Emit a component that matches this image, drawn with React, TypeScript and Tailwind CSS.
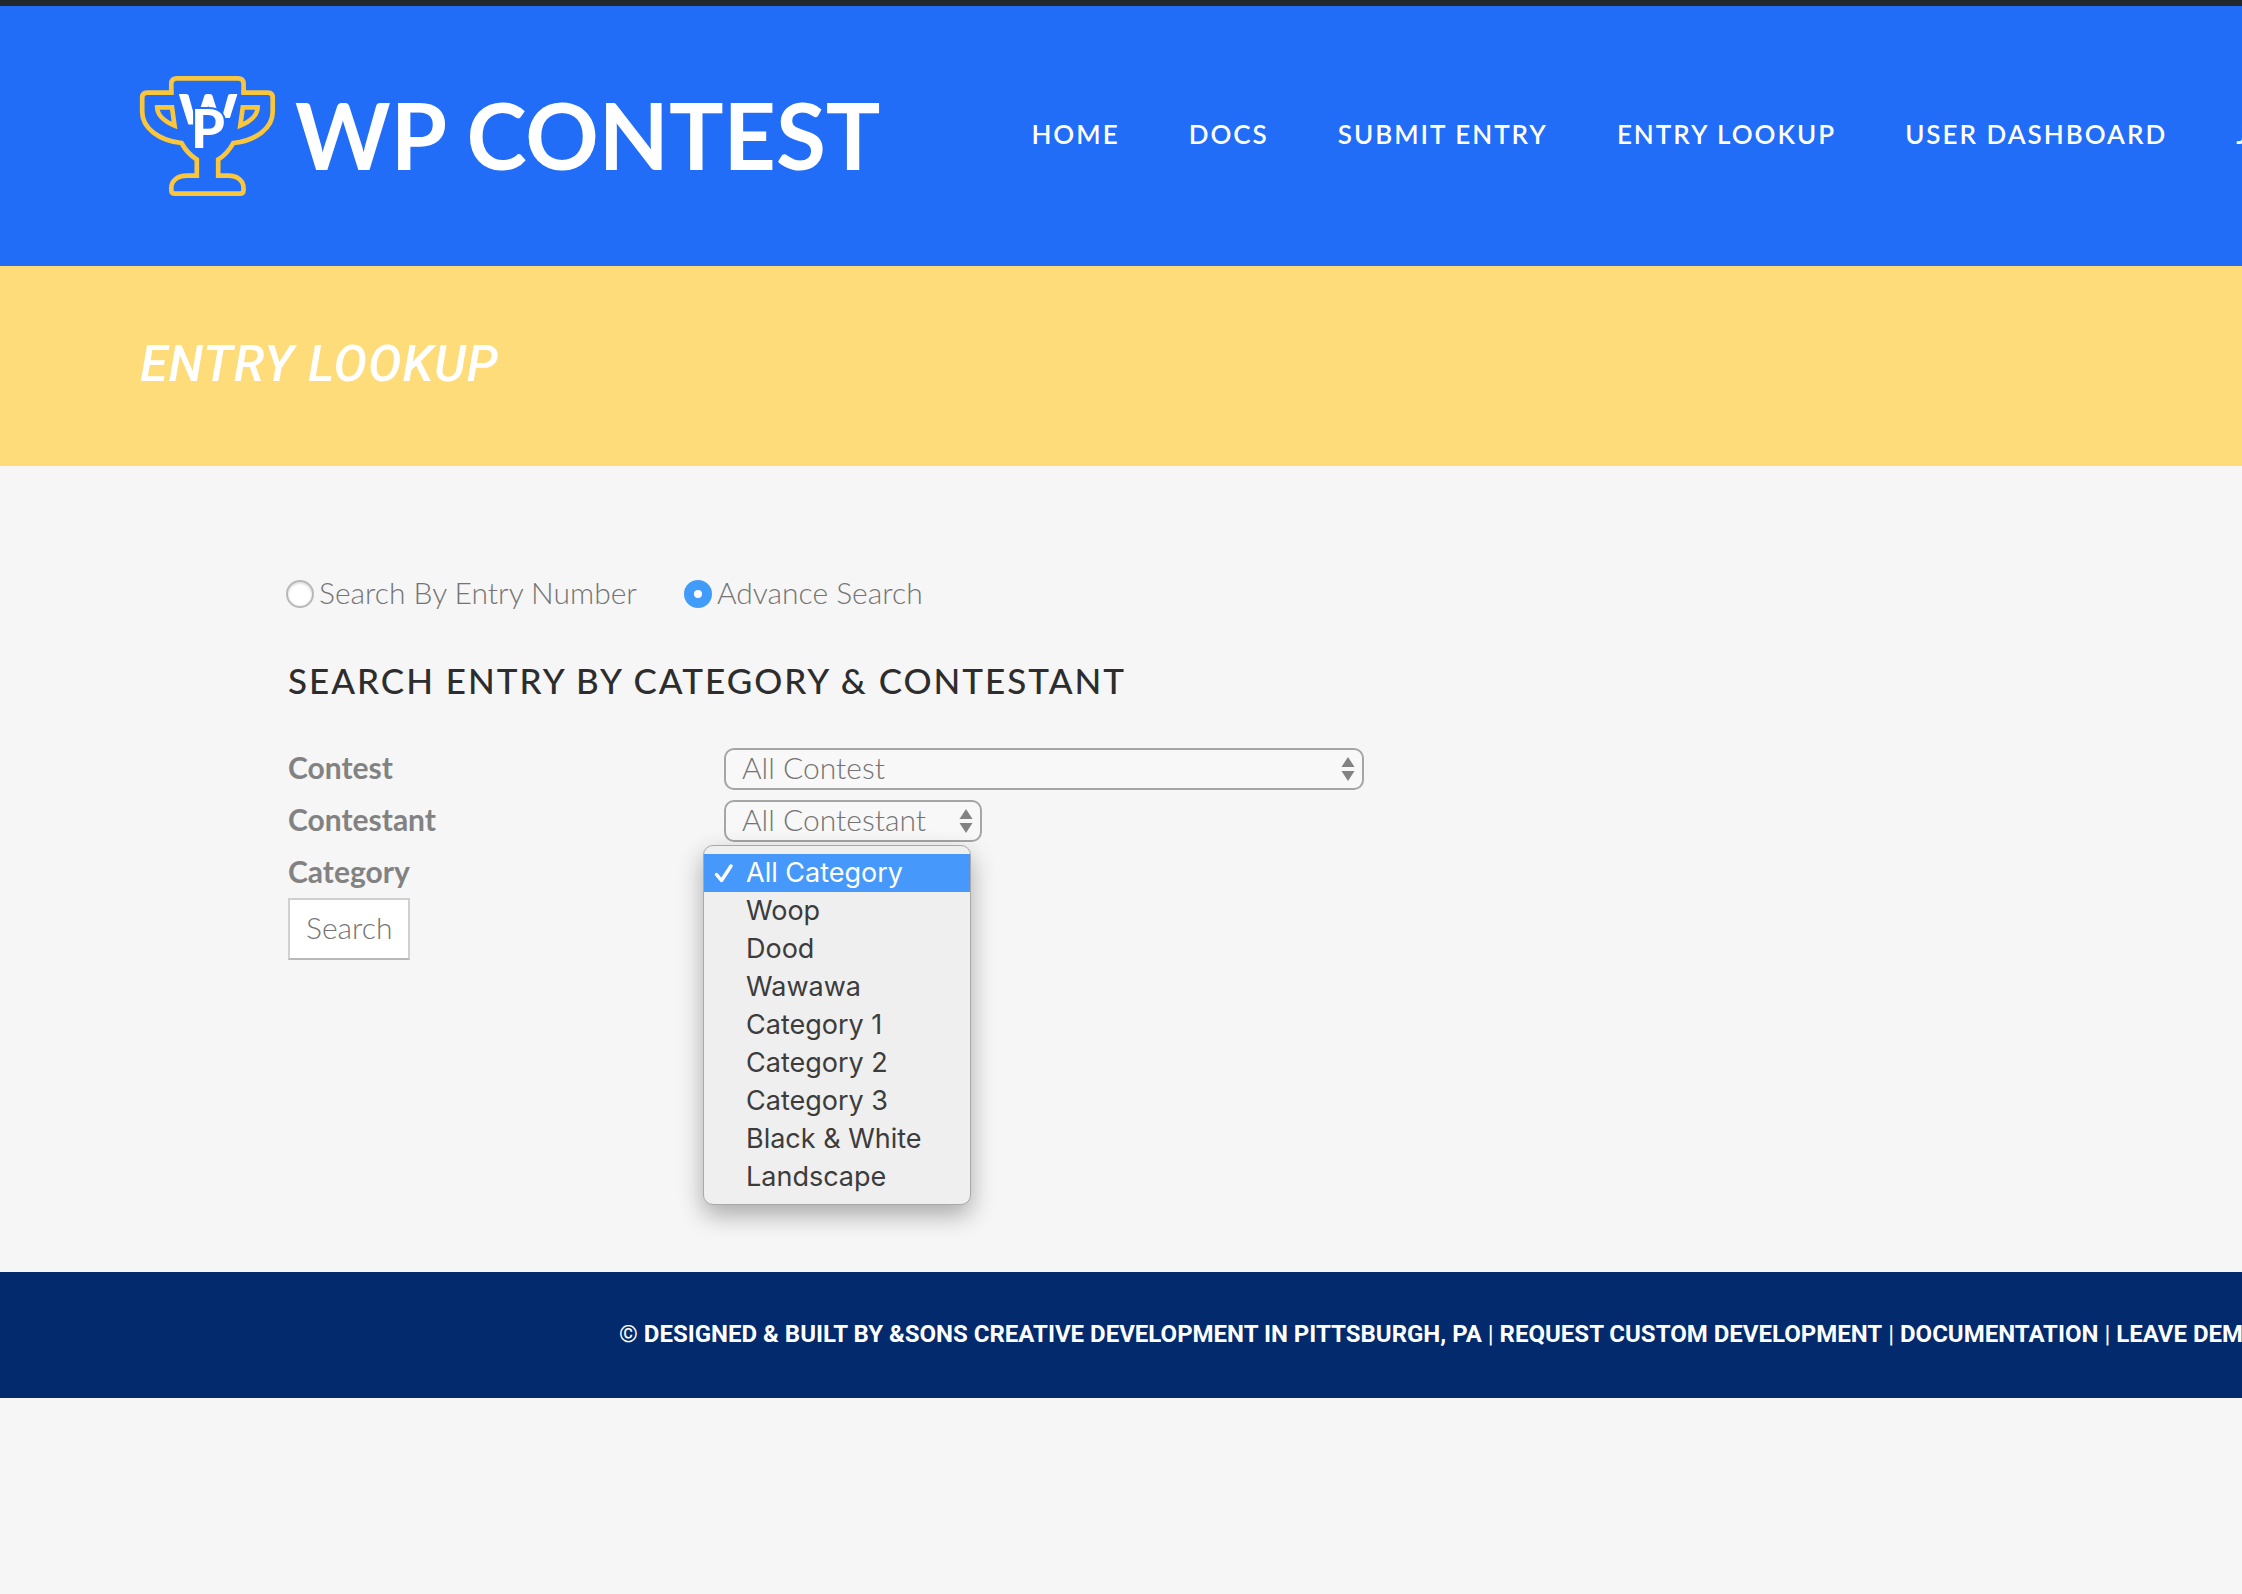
import { useState } from "react";

const navItems = ["Home", "Docs", "Submit Entry", "Entry Lookup", "User Dashboard", "Join Contest"];

const categories = [
  "All Category",
  "Woop",
  "Dood",
  "Wawawa",
  "Category 1",
  "Category 2",
  "Category 3",
  "Black & White",
  "Landscape",
];

function Trophy() {
  return (
    <svg viewBox="19 25 137 122" className="h-[122px] w-[137px] shrink-0" fill="none" aria-hidden="true">
      <defs>
        <clipPath id="cup-letter">
          <path d="M50 40H125V68H92V74.500H50Z" />
        </clipPath>
      </defs>
      <g stroke="#f9c63c" strokeWidth="4.7">
        <path d="M53.5 42.7H27Q22.200 42.700 22.200 48V62C22.200 78 39 90.500 61.500 93C66 101 71 106 76.800 109.500V125.700H67C57 125.700 51.300 131 51.300 138V140Q51.300 143.700 55 143.700H120Q123.500 143.700 123.500 140V138C123.500 131 118 125.700 108 125.700H98.200V109.500C104 106 109 101 113.300 93C136 90.500 152.700 78 152.700 62V48Q152.700 42.700 148 42.700H121.500" />
        <path d="M51.300 44.500V34Q51.300 28.300 57 28.300H118Q123.600 28.300 123.600 34V44.500" />
        <path d="M37.200 57.300H52L54.500 75.500C43 71 37.200 64 37.200 57.300Z" />
        <path d="M137.600 57.300H122.800L120.300 75.500C131.800 71 137.600 64 137.600 57.300Z" />
      </g>
      <g fill="#fff" fontFamily="Lato, sans-serif" fontWeight="900">
        <text x="88" y="84" fontSize="56" textAnchor="middle" clipPath="url(#cup-letter)">W</text>
        <text x="71" y="98" fontSize="54" stroke="#216df7" strokeWidth="4" paintOrder="stroke">P</text>
      </g>
    </svg>
  );
}

function Arrows() {
  return (
    <svg viewBox="0 0 14 26" className="pointer-events-none absolute right-[9px] top-2 h-[26px] w-[14px]" fill="#828282" aria-hidden="true">
      <path d="M7 1L13.500 11H0.500Z" />
      <path d="M7 25L13.500 15H0.500Z" />
    </svg>
  );
}

function Select({ id, options, width }: { id: string; options: string[]; width: string }) {
  return (
    <div className={"relative " + width}>
      <select
        id={id}
        className="h-[42px] w-full appearance-none rounded-[10px] border-2 border-[#a5a5a5] bg-[#f8f8f8] pb-1 pl-4 text-[30px] leading-8 font-light text-[#747474] outline-none"
      >
        {options.map((o) => (
          <option key={o}>{o}</option>
        ))}
      </select>
      <Arrows />
    </div>
  );
}

function Radio({ label, checked, onChange }: { label: string; checked: boolean; onChange: () => void }) {
  return (
    <label className="flex items-center gap-[5px]">
      <input
        type="radio"
        name="mode"
        checked={checked}
        onChange={onChange}
        className="size-7 appearance-none rounded-full border-2 border-[#b9b9b9] bg-white shadow-[inset_0_1px_3px_#00000030] checked:border-[10px] checked:border-[#419bf9] checked:shadow-none"
      />
      <span className="pb-1">{label}</span>
    </label>
  );
}

export default function App() {
  const [mode, setMode] = useState("advance");
  const [category, setCategory] = useState("All Category");

  return (
    <div className="min-h-screen overflow-x-hidden bg-[#f6f6f6] font-['Lato',sans-serif] text-[30px] leading-9 font-light text-[#747474]">
      <div className="h-[6px] bg-[#23282d]" />
      <header className="flex h-[260px] items-center bg-[#216df7] pl-[139px] text-white">
        <a href="#" className="flex shrink-0 items-center gap-[19px]">
          <Trophy />
          <span className="pb-1 text-[91px] leading-none font-bold whitespace-nowrap">WP CONTEST</span>
        </a>
        <nav className="ml-[151px] flex shrink-0 gap-[69px] pb-1 text-[26px] font-semibold tracking-[2px] whitespace-nowrap uppercase">
          {navItems.map((n) => (
            <a key={n} href="#">
              {n}
            </a>
          ))}
        </nav>
      </header>

      <section className="flex h-[200px] items-center bg-[#ffdc7a] pb-1 pl-[140px]">
        <h1 className="font-['Roboto',sans-serif] text-[50px] leading-none font-medium tracking-[1px] text-white italic uppercase">
          Entry Lookup
        </h1>
      </section>

      <main className="px-[288px] pt-[108px] pb-[312px]">
        <div className="-ml-[2px] flex gap-[47px]">
          <Radio label="Search By Entry Number" checked={mode === "number"} onChange={() => setMode("number")} />
          <Radio label="Advance Search" checked={mode === "advance"} onChange={() => setMode("advance")} />
        </div>
        <h2 className="mt-[46px] text-[35px] leading-10 font-medium tracking-[2px] text-[#2d2d2d] uppercase">
          Search entry by category &amp; contestant
        </h2>
        <form onSubmit={(e) => e.preventDefault()}>
          <div className="mt-12 grid grid-cols-[436px_1fr] items-center gap-y-[10px]">
            <label htmlFor="contest" className="pb-1 font-bold text-[#828282]">Contest</label>
            <Select id="contest" options={["All Contest"]} width="w-[640px]" />
            <label htmlFor="contestant" className="pb-1 font-bold text-[#828282]">Contestant</label>
            <Select id="contestant" options={["All Contestant"]} width="w-[258px]" />
            <span id="category-label" className="pb-1 font-bold text-[#828282]">Category</span>
            <div className="relative h-[42px]">
              <ul
                role="listbox"
                aria-labelledby="category-label"
                className="absolute -top-[7px] -left-[21px] w-[268px] rounded-[10px] border border-[#a9a9a9] bg-[#efefef] py-2 font-['Inter',sans-serif] text-[27px] leading-[38px] font-normal text-[#3c3c3c] shadow-[0_10px_24px_#00000050]"
              >
                {categories.map((c) => (
                  <li key={c} role="option" aria-selected={c === category}>
                    <button
                      type="button"
                      onClick={() => setCategory(c)}
                      className={
                        c === category
                          ? "flex w-full items-center bg-[#4698fb] text-left text-white"
                          : "flex w-full items-center text-left"
                      }
                    >
                      <span className="flex w-[42px] pl-[10px]">
                        {c === category && (
                          <svg viewBox="0 0 20 20" className="size-5" fill="none" stroke="#fff" strokeWidth="3.500" strokeLinecap="round" strokeLinejoin="round" aria-hidden="true">
                            <path d="M2.500 11.500L7.500 17.500L17 3" />
                          </svg>
                        )}
                      </span>
                      {c}
                    </button>
                  </li>
                ))}
              </ul>
            </div>
          </div>
          <button type="submit" className="mt-1 h-[62px] border-2 border-b-[#b9b9b9] border-[#d0d0d0] bg-white px-4 pb-1">
            Search
          </button>
        </form>
      </main>

      <footer className="flex h-[126px] items-center bg-[#022a6d] pb-[2px] pl-[619px] font-['Roboto',sans-serif] text-[24px] font-normal whitespace-nowrap text-white uppercase">
        <p className="whitespace-pre">
          {"© "}
          <a href="#" className="font-bold">Designed &amp; built by &amp;Sons Creative Development in Pittsburgh, PA</a>
          {" | "}
          <a href="#" className="font-bold">Request custom development</a>
          {" | "}
          <a href="#" className="font-bold">Documentation</a>
          {" | "}
          <a href="#" className="font-bold">Leave demo</a>
        </p>
      </footer>
    </div>
  );
}
